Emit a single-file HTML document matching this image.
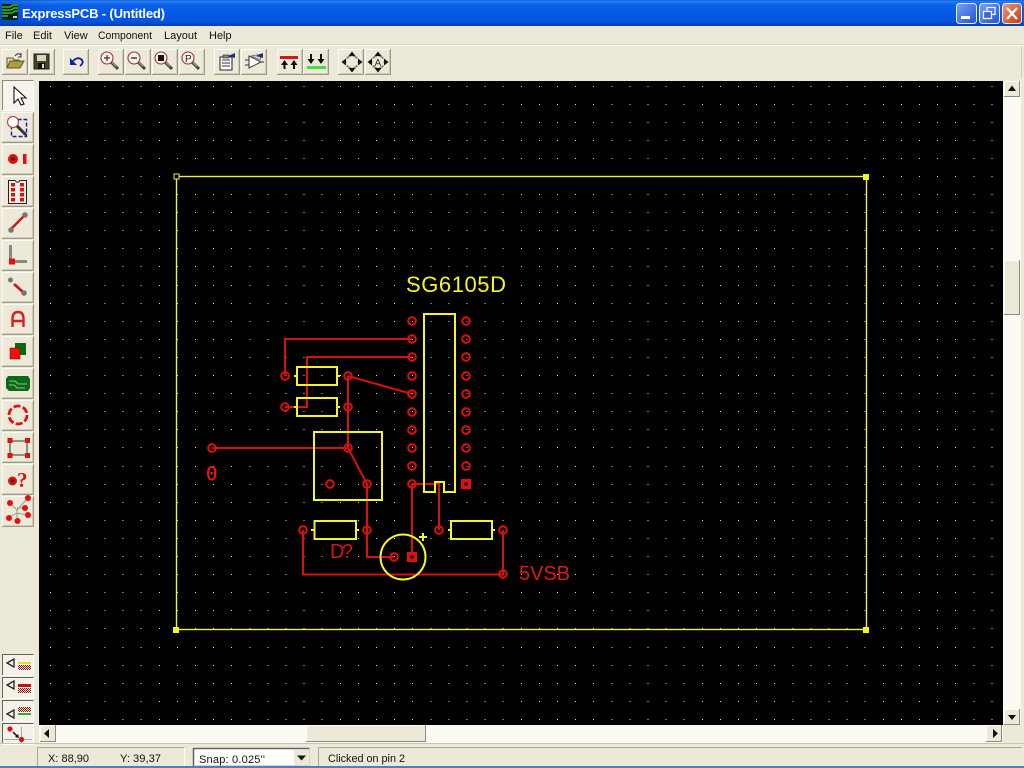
<!DOCTYPE html>
<html><head><meta charset="utf-8"><title>ExpressPCB</title>
<style>html,body{margin:0;padding:0;background:#ece9d8;overflow:hidden}svg{display:block}
.m{font:11px "Liberation Sans",sans-serif;fill:#111}
.p{fill:none;stroke:#d81010;stroke-width:2}
</style></head><body>
<svg xmlns="http://www.w3.org/2000/svg" width="1024" height="768" viewBox="0 0 1024 768">
<defs>
<linearGradient id="tg" x1="0" y1="0" x2="0" y2="1"><stop offset="0" stop-color="#0a5ae0"/><stop offset=".06" stop-color="#2a80f4"/><stop offset=".18" stop-color="#0a60e8"/><stop offset=".8" stop-color="#0454e0"/><stop offset="1" stop-color="#0340b8"/></linearGradient>
<linearGradient id="tg2" x1="0" y1="0" x2="1" y2="0"><stop offset="0" stop-color="#0030a0" stop-opacity=".3"/><stop offset=".05" stop-color="#0030a0" stop-opacity="0"/></linearGradient>
<linearGradient id="bb" x1="0" y1="0" x2="1" y2="1"><stop offset="0" stop-color="#7ea4f0"/><stop offset="1" stop-color="#1f4fd0"/></linearGradient>
<linearGradient id="bc" x1="0" y1="0" x2="1" y2="1"><stop offset="0" stop-color="#ea9a80"/><stop offset="1" stop-color="#c63810"/></linearGradient>
<pattern id="chk" width="2" height="2" patternUnits="userSpaceOnUse"><rect width="2" height="2" fill="#f0e8e0"/><rect width="1" height="1" fill="#a01010"/><rect x="1" y="1" width="1" height="1" fill="#a01010"/></pattern>
<g id="tb"><rect width="26" height="26" fill="#ece9d8"/><path d="M.5 25V.5H25.5" fill="none" stroke="#fbfaf4"/><path d="M25.500 0V25.500H0" fill="none" stroke="#9a9888"/><path d="M24.500 1V24.500H1" fill="none" stroke="#d0cdbc"/></g>
<g id="lb"><rect width="32" height="31" fill="#ece9d8"/><path d="M.5 30V.5H31.5" fill="none" stroke="#fbfaf4"/><path d="M31.500 0V30.500H0" fill="none" stroke="#9a9888"/><path d="M30.500 1V29.500H1" fill="none" stroke="#d0cdbc"/></g>
<g id="sb"><rect width="32" height="22" fill="#f4f2e8"/><path d="M.5 21V.5H31.5" fill="none" stroke="#66645a"/><path d="M31.500 1V21.500H1" fill="none" stroke="#fff"/></g>
<g id="mag"><circle cx="0" cy="0" r="6" fill="#f6f4ee" stroke="#a83030" stroke-width="1.100"/><path d="M4.500 4.500L11 11" stroke="#444" stroke-width="3"/><path d="M5 4.500l4 4" stroke="#aaa" stroke-width="1"/></g>
<g id="pad"><circle r="3.800" fill="none" stroke="#d81010" stroke-width="2.100"/></g>
<g id="mv"><path d="M-5.500 -3.500Q-3.500 -5.500 -1 -6.500M1 -6.500Q3.500 -5.500 5.500 -3.500M6.500 -1V1M-6.500 -1V1M-5.500 3.500Q-3.500 5.500 -1 6.500M1 6.500Q3.500 5.500 5.500 3.500" fill="none" stroke="#8a8a7a" stroke-width="1.800"/><path d="M0 -10.500L-3.500 -6H3.500Z M0 10.500L-3.500 6H3.500Z M-10.500 0L-6 -3.500V3.500Z M10.500 0L6 -3.500V3.500Z" fill="#111"/></g>
</defs>

<!-- window -->
<rect width="1024" height="768" fill="#ece9d8"/>
<rect width="1024" height="26" fill="url(#tg)"/>
<rect width="1024" height="26" fill="url(#tg2)"/>
<rect x="2" y="4" width="16" height="16" fill="#05240a"/>
<path d="M2 7H10L13 5H18M2 10H11L14 8H18M2 13H12L15 11H18M2 16H8" fill="none" stroke="#3fd040" stroke-width="1.300"/>
<path d="M13 17h4" stroke="#d0d0d0" stroke-width="2"/>
<text x="22" y="18" font-family="Liberation Sans,sans-serif" font-size="13" font-weight="bold" fill="#fff" textLength="143" lengthAdjust="spacing">ExpressPCB - (Untitled)</text>
<rect x="956.500" y="3.500" width="20" height="20" rx="3" fill="url(#bb)" stroke="#e8eefc"/>
<rect x="961" y="16" width="9" height="3" fill="#fff"/>
<rect x="979.500" y="3.500" width="20" height="20" rx="3" fill="url(#bb)" stroke="#e8eefc"/>
<rect x="987" y="7.500" width="8" height="7" fill="none" stroke="#fff" stroke-width="1.200"/>
<rect x="983.500" y="11.500" width="8" height="7" fill="#3a68dc" stroke="#fff" stroke-width="1.200"/>
<rect x="1002.500" y="3.500" width="19" height="20" rx="3" fill="url(#bc)" stroke="#f4e8e0"/>
<path d="M1007 8L1017 19M1017 8L1007 19" stroke="#fff" stroke-width="2.200"/>

<!-- menu -->
<text class="m" x="5" y="39">File</text>
<text class="m" x="33" y="39">Edit</text>
<text class="m" x="64" y="39">View</text>
<text class="m" x="98" y="39" textLength="54" lengthAdjust="spacingAndGlyphs">Component</text>
<text class="m" x="164" y="39" textLength="33" lengthAdjust="spacingAndGlyphs">Layout</text>
<text class="m" x="209" y="39">Help</text>
<path d="M0 44.500H1024" stroke="#d8d5c4"/><path d="M0 45.500H1024" stroke="#fbfaf4"/>
<path d="M1021.500 46V78" stroke="#d0cdbc"/>

<!-- top toolbar buttons -->
<use href="#tb" x="2" y="49"/><use href="#tb" x="29" y="49"/><use href="#tb" x="63" y="49"/>
<use href="#tb" x="98" y="49"/><use href="#tb" x="125" y="49"/><use href="#tb" x="152" y="49"/><use href="#tb" x="179" y="49"/>
<use href="#tb" x="214" y="49"/><use href="#tb" x="241" y="49"/>
<use href="#tb" x="277" y="49"/><use href="#tb" x="303" y="49"/>
<use href="#tb" x="338" y="49"/><use href="#tb" x="365" y="49"/>

<!-- open -->
<path d="M7 67V58H13L14 60H19V62" fill="#f2e088" stroke="#555" stroke-width="1"/>
<path d="M7 68L10 61H24L20 68Z" fill="#b0a030" stroke="#555" stroke-width="1"/>
<path d="M15 56Q18 52 21 55" fill="none" stroke="#333"/><path d="M21 53V57H18" fill="none" stroke="#333"/>
<!-- save -->
<rect x="34" y="54" width="15" height="15" fill="#444428" stroke="#222"/>
<rect x="37" y="55" width="9" height="6" fill="#d8d8c0"/>
<rect x="38" y="63" width="7" height="6" fill="#111"/>
<rect x="42" y="64" width="2" height="4" fill="#ddd"/>
<!-- undo -->
<path d="M73 61Q78 56 82 60Q84 63 80 66" fill="none" stroke="#1020b0" stroke-width="1.800"/>
<path d="M70 58V65H77Z" fill="#1020b0"/>
<!-- zoom -->
<use href="#mag" x="107" y="58"/><path d="M104 58H110M107 55V61" stroke="#333" stroke-width="1.200"/>
<use href="#mag" x="134" y="58"/><path d="M131 58H137" stroke="#333" stroke-width="1.400"/>
<use href="#mag" x="161" y="58"/><rect x="158" y="55" width="6" height="6" fill="#111"/>
<use href="#mag" x="188" y="58"/><text x="185" y="62" font-family="Liberation Sans,sans-serif" font-size="10" fill="#222">P</text>
<!-- props -->
<rect x="220" y="57" width="12" height="13" fill="#fff" stroke="#222"/><path d="M222 60H230M222 63H230M222 66H230" stroke="#333"/>
<rect x="223" y="55" width="6" height="3" fill="#888" stroke="#222" stroke-width=".6"/>
<path d="M228 56L235 53V58Z" fill="#223080"/>
<path d="M249 56V68L261 62Z" fill="#fff" stroke="#333"/><path d="M245 60H249M245 65H249M261 62H264" stroke="#333"/>
<path d="M251 56L260 60L262 54Z" fill="#d0d0d0" stroke="#444" stroke-width=".6"/><path d="M256 56L263 53V58Z" fill="#223080"/>
<!-- layer arrows -->
<rect x="280" y="56" width="18" height="3" fill="#d01818"/>
<path d="M284.500 60L281 65H283.500V69H285.500V65H288Z M294 60L290.500 65H293V69H295V65H297.500Z" fill="#111"/>
<path d="M311 64L307.500 59H310V54H312V59H314.500Z M321 64L317.500 59H320V54H322V59H324.500Z" fill="#111"/>
<rect x="307" y="66" width="19" height="3" fill="#40e040"/>
<!-- move -->
<use href="#mv" x="352" y="62"/>
<use href="#mv" x="378" y="62"/>
<text x="374.500" y="66" font-family="Liberation Sans,sans-serif" font-size="10" fill="#333">A</text>

<!-- left toolbar -->
<rect x="2" y="80" width="32" height="31" fill="#f6f4ec"/><path d="M2.500 110V80.500H33.500" fill="none" stroke="#8c8a7c"/><path d="M33.500 81V110.500H3" fill="none" stroke="#fff"/>
<use href="#lb" x="2" y="112"/><use href="#lb" x="2" y="144"/><use href="#lb" x="2" y="176"/><use href="#lb" x="2" y="208"/>
<use href="#lb" x="2" y="240"/><use href="#lb" x="2" y="272"/><use href="#lb" x="2" y="304"/><use href="#lb" x="2" y="336"/>
<use href="#lb" x="2" y="368"/><use href="#lb" x="2" y="400"/><use href="#lb" x="2" y="432"/><use href="#lb" x="2" y="464"/><use href="#lb" x="2" y="496"/>

<path d="M14 87V103L18 99L21 105L24 104L21 98L26 98Z" fill="#fff" stroke="#111" stroke-width="1.100"/>
<rect x="11.500" y="119.500" width="15" height="17" fill="none" stroke="#1818a8" stroke-dasharray="4 2" stroke-width="1.400"/>
<circle cx="13" cy="122" r="5.500" fill="#fff" stroke="#b05050" stroke-width="1.200"/>
<path d="M17 126L26 135" stroke="#333" stroke-width="3"/>
<circle cx="13" cy="159" r="5" fill="#e01010"/><circle cx="13" cy="159" r="1.700" fill="#222"/>
<rect x="23" y="154" width="3.500" height="10" fill="#e01010"/>
<path d="M8.500 180.500H15Q17.500 184 20 180.500H26.500V203.500H8.500Z" fill="#f4f0e8" stroke="#222"/>
<path d="M11 183h4v3.500h-4zM20 183h4v3.500h-4zM11 188h4v3.500h-4zM20 188h4v3.500h-4zM11 193h4v3.500h-4zM20 193h4v3.500h-4zM11 198h4v3.500h-4zM20 198h4v3.500h-4z" fill="#e01010"/>
<path d="M11 229L25 215" stroke="#d01818" stroke-width="2.600"/><circle cx="11" cy="230" r="2.800" fill="#777"/><circle cx="25" cy="215" r="2.800" fill="#777"/>
<path d="M10.500 245V261.500H27" fill="none" stroke="#888" stroke-width="3"/><rect x="9" y="258.500" width="6" height="6" fill="#e81010"/>
<path d="M14 284L23 292" stroke="#d01818" stroke-width="2.800"/><circle cx="10.500" cy="280" r="2.500" fill="#777"/><circle cx="24" cy="293" r="2.800" fill="#777"/>
<path d="M12.500 327V319Q12.500 312 18 312Q23.500 312 23.500 319V327M12.500 321H23.500" fill="none" stroke="#d82020" stroke-width="2.400"/>
<rect x="15" y="343" width="11" height="12" fill="#0a6a10"/>
<rect x="10" y="348" width="10" height="11" fill="#f01010" stroke="#700" stroke-width=".5"/>
<path d="M8 376H28L30 379V388L28 391H9L6 388V379Z" fill="#0a6a14"/>
<path d="M9 381H15L18 384H27M9 385H14L17 388H25" fill="none" stroke="#b8d8b8" stroke-width=".8"/>
<circle cx="18" cy="415" r="9" fill="none" stroke="#e01010" stroke-width="2.800" stroke-dasharray="7 2.400"/>
<rect x="10" y="441" width="17" height="14" fill="none" stroke="#333"/>
<path d="M7.500 438h5v5h-5zM25 438h5v5h-5zM7.500 453h5v5h-5zM25 453h5v5h-5z" fill="#e01010"/>
<circle cx="12.500" cy="481" r="4.500" fill="#e01010"/><circle cx="12.500" cy="481" r="1.600" fill="#222"/>
<text x="17" y="487" font-family="Liberation Serif,serif" font-size="21" font-weight="bold" fill="#e01010">?</text>
<path d="M10 503L17 510L28 498M24 508H17M17 510V521M8 518L17 513M28 515L17 513" fill="none" stroke="#999" stroke-width="1"/>
<g fill="#e01010"><circle cx="10" cy="503" r="3"/><circle cx="28" cy="498" r="3"/><circle cx="25" cy="508" r="3"/><circle cx="28" cy="515" r="3"/><circle cx="9" cy="518" r="3"/><circle cx="17.500" cy="521" r="3"/></g>

<use href="#sb" x="2" y="654"/><use href="#sb" x="2" y="677"/><use href="#sb" x="2" y="700"/><use href="#sb" x="2" y="723"/>
<path d="M7 663L14 659V667Z" fill="none" stroke="#222" stroke-width="1.300"/><rect x="18" y="662" width="13" height="2" fill="#e8e010"/><rect x="18" y="665" width="13" height="5" fill="url(#chk)"/>
<path d="M7 685L14 681V689Z" fill="none" stroke="#222" stroke-width="1.300"/><rect x="18" y="684" width="13" height="3" fill="#c01010"/><rect x="18" y="688" width="13" height="5" fill="url(#chk)"/>
<path d="M7 714L14 710V718Z" fill="none" stroke="#222" stroke-width="1.300"/><rect x="18" y="707" width="13" height="5" fill="url(#chk)"/><rect x="18" y="713" width="13" height="2" fill="#30b030"/>
<path d="M4 739.500H32M21.500 727V743" stroke="#aaa"/><path d="M13 732L18 737" stroke="#111" stroke-width="1.500"/><path d="M19 738L15 737L18 734Z" fill="#111"/>
<circle cx="10" cy="729" r="2.600" fill="#e01010"/><circle cx="21.500" cy="739.500" r="2.600" fill="#e01010"/>

<!-- canvas -->
<rect x="39" y="81" width="964" height="644" fill="#000"/>
<path shape-rendering="crispEdges" stroke="#d8d8d8" stroke-width="1" stroke-dasharray="1 17.100" fill="none" d="M50.200 86.500H1003M50.200 104.500H1003M50.200 122.500H1003M50.200 140.500H1003M50.200 158.500H1003M50.200 176.500H1003M50.200 194.500H1003M50.200 212.500H1003M50.200 230.500H1003M50.200 248.500H1003M50.200 266.500H1003M50.200 285.500H1003M50.200 303.500H1003M50.200 321.500H1003M50.200 339.500H1003M50.200 357.500H1003M50.200 375.500H1003M50.200 393.500H1003M50.200 411.500H1003M50.200 429.500H1003M50.200 447.500H1003M50.200 466.500H1003M50.200 484.500H1003M50.200 502.500H1003M50.200 520.500H1003M50.200 538.500H1003M50.200 556.500H1003M50.200 574.500H1003M50.200 592.500H1003M50.200 610.500H1003M50.200 628.500H1003M50.200 647.500H1003M50.200 665.500H1003M50.200 683.500H1003M50.200 701.500H1003M50.200 719.500H1003"/>

<!-- board -->
<rect x="176.500" y="176.500" width="690" height="453" fill="none" stroke="#f0f040" stroke-width="1.400"/>
<rect x="174" y="174" width="5" height="5" fill="#000" stroke="#f0f040"/>
<rect x="863" y="174" width="6" height="6" fill="#f4f420"/><rect x="173" y="627" width="6" height="6" fill="#f4f420"/><rect x="863" y="627" width="6" height="6" fill="#f4f420"/>

<!-- traces -->
<g class="p">
<path d="M412 339H285V376"/><path d="M412 357H307V407H285"/>
<path d="M348 376L412 394"/><path d="M348 376V448H212"/>
<path d="M348 448L367 484V557H394"/>
<path d="M412 484V557"/><path d="M412 484H439V530"/>
<path d="M303 530V574.500H503V530"/>
</g>
<!-- silk -->
<g fill="none" stroke="#f4f428" stroke-width="2">
<rect x="297" y="367" width="40" height="18"/><rect x="297" y="398" width="40" height="18"/>
<path d="M294 376H297M337 376H340M294 407H297M337 407H340"/>
<path d="M424 314H455V492H444V482H435V492H424Z"/>
<rect x="314" y="432" width="68" height="68"/>
<rect x="314.500" y="521" width="41.500" height="18"/><rect x="451" y="521" width="41" height="18"/>
<path d="M311 530H314M356 530H359M448 530H451M492 530H495"/>
<circle cx="403" cy="557" r="22.500"/>
<path d="M419 537H427M423 533V541"/>
</g>
<!-- pads -->
<use href="#pad" x="412" y="321"/><use href="#pad" x="412" y="339"/><use href="#pad" x="412" y="357"/><use href="#pad" x="412" y="376"/><use href="#pad" x="412" y="394"/><use href="#pad" x="412" y="412"/><use href="#pad" x="412" y="430"/><use href="#pad" x="412" y="448"/><use href="#pad" x="412" y="466"/><use href="#pad" x="412" y="484"/>
<use href="#pad" x="466" y="321"/><use href="#pad" x="466" y="339"/><use href="#pad" x="466" y="357"/><use href="#pad" x="466" y="376"/><use href="#pad" x="466" y="394"/><use href="#pad" x="466" y="412"/><use href="#pad" x="466" y="430"/><use href="#pad" x="466" y="448"/><use href="#pad" x="466" y="466"/>
<rect x="461" y="479" width="10" height="10" fill="#e01010"/><rect x="464.500" y="482.500" width="3" height="3" fill="#000"/>
<rect x="407" y="552" width="10" height="10" fill="#e01010"/><rect x="410.500" y="555.500" width="3" height="3" fill="#000"/>
<use href="#pad" x="285" y="376"/><use href="#pad" x="285" y="407"/><use href="#pad" x="348" y="376"/><use href="#pad" x="348" y="407"/>
<use href="#pad" x="348" y="448"/><use href="#pad" x="212" y="448"/><use href="#pad" x="330" y="484"/><use href="#pad" x="367" y="484"/>
<use href="#pad" x="303" y="530"/><use href="#pad" x="367" y="530"/><use href="#pad" x="394" y="557"/><use href="#pad" x="439" y="530"/><use href="#pad" x="503" y="530"/><use href="#pad" x="503" y="574"/>
<!-- labels -->
<text x="406" y="292" font-family="Liberation Sans,sans-serif" font-size="22" fill="#f4f428" textLength="100" lengthAdjust="spacing">SG6105D</text>
<text x="519" y="580" font-family="Liberation Sans,sans-serif" font-size="20" fill="#e01818" textLength="51" lengthAdjust="spacing">5VSB</text>
<text x="330" y="558" font-family="Liberation Sans,sans-serif" font-size="20" fill="#d01818" textLength="23" lengthAdjust="spacing">D?</text>
<text x="206" y="480" font-family="DejaVu Sans Mono,monospace" font-size="19" fill="#e01818" stroke="#e01818" stroke-width=".4">0</text>

<!-- right scrollbar -->
<rect x="1003" y="81" width="18" height="644" fill="#fbfaf4"/>
<rect x="1004" y="81" width="16" height="16" fill="#ece9d8"/><path d="M1004.500 96V81.500H1019.500" fill="none" stroke="#fff"/><path d="M1019.500 81V96.500H1004" fill="none" stroke="#8c8a7c"/>
<path d="M1012 85.500L1008 91H1016Z" fill="#111"/>
<rect x="1004" y="260" width="16" height="55" fill="#ece9d8"/><path d="M1004.500 314V260.500H1019.500" fill="none" stroke="#fff"/><path d="M1019.500 260V314.500H1004" fill="none" stroke="#8c8a7c"/>
<rect x="1004" y="709" width="16" height="16" fill="#ece9d8"/><path d="M1004.500 724V709.500H1019.500" fill="none" stroke="#fff"/><path d="M1019.500 709V724.500H1004" fill="none" stroke="#8c8a7c"/>
<path d="M1012 720L1008 715H1016Z" fill="#111"/>

<!-- bottom scrollbar -->
<rect x="39" y="725" width="964" height="18" fill="#fbfaf4"/>
<rect x="40" y="725" width="16" height="17" fill="#ece9d8"/><path d="M40.500 741V725.500H55.500" fill="none" stroke="#fff"/><path d="M55.500 725V741.500H40" fill="none" stroke="#8c8a7c"/>
<path d="M44 733.500L49 729V738Z" fill="#111"/>
<rect x="306" y="725" width="120" height="17" fill="#ece9d8"/><path d="M306.500 741V725.500H425.500" fill="none" stroke="#fff"/><path d="M425.500 725V741.500H306" fill="none" stroke="#8c8a7c"/>
<rect x="986" y="725" width="16" height="17" fill="#ece9d8"/><path d="M986.500 741V725.500H1001.500" fill="none" stroke="#fff"/><path d="M1001.500 725V741.500H986" fill="none" stroke="#8c8a7c"/>
<path d="M998 733.500L993 729V738Z" fill="#111"/>
<path d="M0 743.500H1024" stroke="#c8c5b4"/>

<!-- status bar -->
<path d="M37.500 766V747.500H184.500" fill="none" stroke="#aca899"/>
<path d="M184.500 748V766" stroke="#fff"/>
<text class="m" x="48" y="762" textLength="41" lengthAdjust="spacingAndGlyphs">X: 88,90</text>
<text class="m" x="120" y="762" textLength="41" lengthAdjust="spacingAndGlyphs">Y: 39,37</text>
<rect x="193" y="748" width="117" height="18" fill="#fff"/>
<path d="M193.500 766V748.500H309.500" fill="none" stroke="#66645a" stroke-width="1.500"/><path d="M309.500 749V765.500H194" fill="none" stroke="#d8d5c4"/>
<rect x="294" y="750" width="15" height="15" fill="#ece9d8"/>
<path d="M297 755.500H306L301.500 760.500Z" fill="#111"/>
<text class="m" x="199" y="763" textLength="66" lengthAdjust="spacing">Snap:  0.025''</text>
<path d="M318.500 766V747.500H1022" fill="none" stroke="#aca899"/>
<text class="m" x="328" y="762" textLength="77" lengthAdjust="spacingAndGlyphs">Clicked on pin 2</text>
<rect x="0" y="766" width="1024" height="2" fill="#4a7fd0"/>
</svg>
</body></html>
